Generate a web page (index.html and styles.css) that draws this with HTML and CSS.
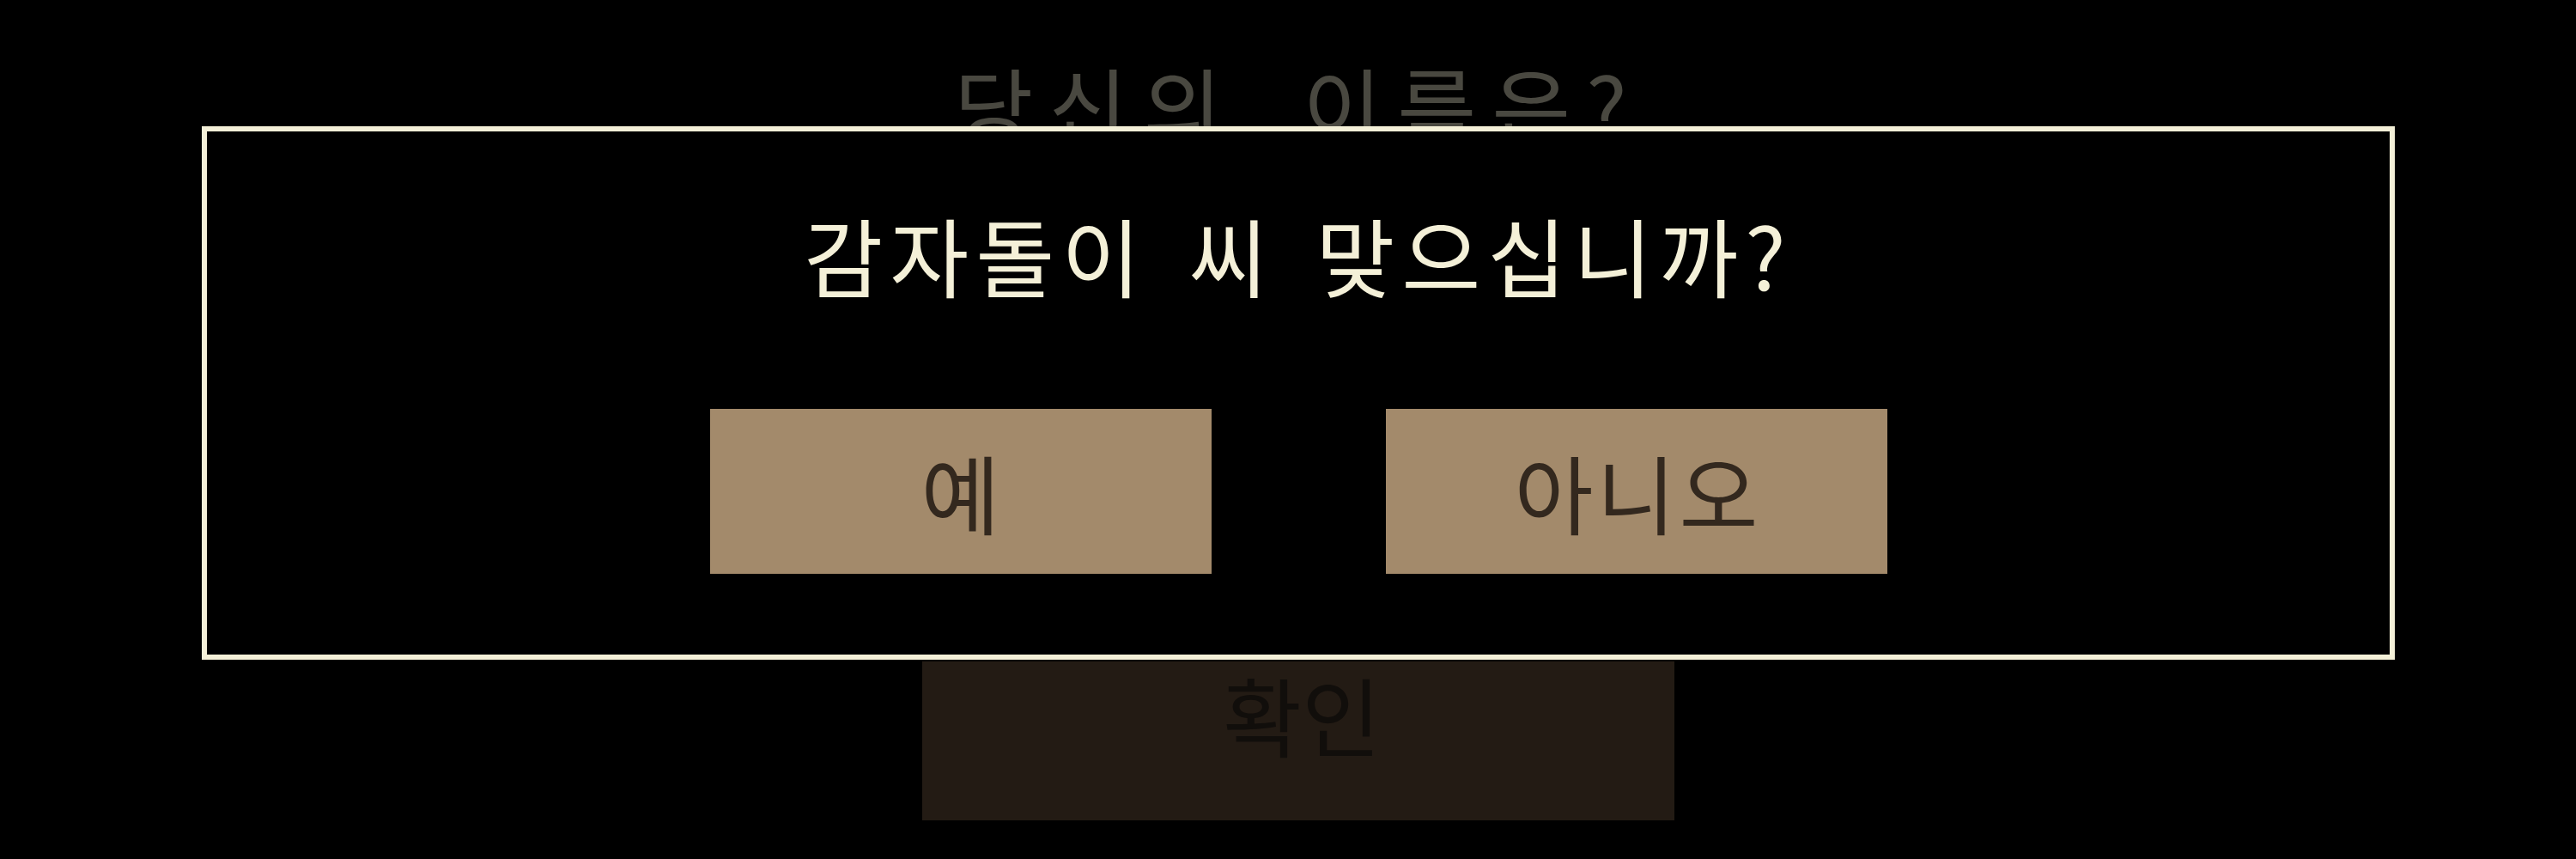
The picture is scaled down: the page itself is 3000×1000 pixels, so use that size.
FILE: index.html
```html
<!DOCTYPE html>
<html lang="ko">
<head>
<meta charset="utf-8">
<title>이름 확인</title>
<link rel="stylesheet" href="styles.css">
</head>
<body>
<div class="screen">
  <div class="page">
    <h1 class="page-title">당신의 이름은?</h1>
    <div class="name-field">감자돌이</div>
    <button class="confirm-btn">확인</button>
  </div>
  <div class="overlay"></div>
  <div class="dialog">
    <p class="dialog-text">감자돌이 씨 맞으십니까?</p>
    <div class="dialog-actions">
      <button class="dialog-btn">예</button>
      <button class="dialog-btn">아니오</button>
    </div>
  </div>
</div>
</body>
</html>
```
FILE: styles.css
```css
html, body {
  margin: 0;
  padding: 0;
  background: #000;
}
body {
  width: 3000px;
  height: 1000px;
  overflow: hidden;
  font-family: "Noto Sans CJK KR", "Noto Sans", sans-serif;
}
.screen {
  position: relative;
  width: 3000px;
  height: 1000px;
}
.page {
  display: flex;
  flex-direction: column;
  align-items: center;
  padding: 71px 0 0 24px;
}
.page-title {
  margin: 0;
  font-size: 100px;
  font-weight: 400;
  line-height: 1;
  letter-spacing: 18px;
  word-spacing: 30px;
  color: #f4f0d8;
}
.name-field {
  margin: 150px 0 149px;
  width: 1400px;
  height: 300px;
  border-bottom: 6px solid #f4f0d8;
  box-sizing: border-box;
  color: #f4f0d8;
  font-size: 100px;
  line-height: 1;
  display: flex;
  align-items: center;
  justify-content: center;
}
.confirm-btn {
  width: 876px;
  height: 185px;
  border: none;
  padding: 11px 0 0 8px;
  margin: 0;
  background: #775a43;
  color: #3a2f26;
  font-family: inherit;
  font-size: 100px;
  line-height: 1;
  letter-spacing: 0;
  display: flex;
  justify-content: center;
  align-items: flex-start;
}
.overlay {
  position: absolute;
  inset: 0;
  background: rgba(0, 0, 0, 0.7);
}
.dialog {
  position: absolute;
  left: 235px;
  top: 147px;
  width: 2554px;
  box-sizing: border-box;
  border: 6px solid #f4f0d8;
  background: #000;
  padding: 93px 0 94px;
  display: flex;
  flex-direction: column;
  align-items: center;
}
.dialog-text {
  margin: 0;
  font-size: 100px;
  line-height: 1;
  letter-spacing: 8px;
  word-spacing: 12px;
  color: #f4f0d8;
}
.dialog-actions {
  margin-top: 130px;
  display: flex;
  gap: 203px;
}
.dialog-btn {
  width: 584px;
  height: 192px;
  border: none;
  margin: 0;
  padding: 0 0 0 4px;
  background: #a38a6b;
  color: #33281e;
  font-family: inherit;
  font-size: 100px;
  line-height: 1;
  letter-spacing: 4px;
  display: flex;
  justify-content: center;
  align-items: center;
}
```
